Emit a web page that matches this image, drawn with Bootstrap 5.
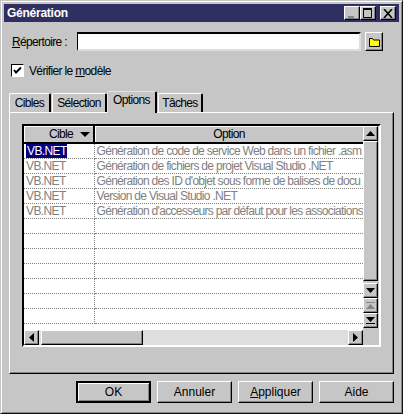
<!DOCTYPE html>
<html lang="fr">
<head>
    <meta charset="UTF-8">
    <title>Génération</title>
    <link href="https://cdn.jsdelivr.net/npm/bootstrap@5.3.2/dist/css/bootstrap.min.css" rel="stylesheet">
    <style>
        body { margin: 0; background: #c6c6c6; font-family: "Liberation Sans", Arial, sans-serif; font-size: 12px; line-height: 14px; letter-spacing: -.65px; color: #000; }
        u { text-underline-offset: 1px; }

        .raised { background: #c6c6c6; border: 1px solid; border-color: #fff #000 #000 #fff; box-shadow: inset -1px -1px 0 #848484; }

        .win { box-sizing: border-box; width: 403px; height: 414px; padding: 3px; border: 1px solid; border-color: #c6c6c6 #111 #111 #c6c6c6; box-shadow: inset 1px 1px 0 #fff, inset -1px -1px 0 #848484; }
        .titlebar { height: 18px; background: #2f2f62; color: #fff; font-size: 12px; font-weight: 700; letter-spacing: -.25px; padding-left: 3px; padding-right: 3px; }
        .capbtn { width: 16px; height: 14px; padding: 0; }
        .capbtn svg { display: block; margin: auto; }

        .dirrow { margin-top: 10px; padding-left: 8px; padding-right: 16px; height: 19px; }
        .dirlabel { width: 65px; }
        .dirinput { width: 285px; height: 19px; border: 1px solid; border-color: #000 #dedede #dedede #000; border-width: 2px 2px 2px 1px; border-radius: 0; padding: 0 2px; font-size: 12px; }
        .folderbtn { width: 18px; height: 19px; margin-left: 4px; padding: 0; border-radius: 0; }

        .chkrow { margin-top: 13px; padding-left: 7px; height: 13px; }
        .chkbox { width: 13px; height: 13px; margin: 0; border-radius: 0 !important; border: 1px solid; border-color: #000 #fff #fff #000; background-color: #fff; background-image: none; box-shadow: none; }
        .chkbox:checked { background-color: #fff; border-color: #000 #fff #fff #000; background-size: 11px 11px; background-image: url("data:image/svg+xml,%3csvg xmlns='http://www.w3.org/2000/svg' viewBox='0 0 11 11'%3e%3cpath fill='none' stroke='%23000' stroke-width='2' d='M2 5l2 2.5L9 2.5'/%3e%3c/svg%3e"); }
        .chklabel { margin-left: 5px; }

        .tabstrip { margin-top: 14px; margin-left: 5px; height: 21px; border: 0; flex-wrap: nowrap; align-items: flex-end; position: relative; z-index: 1; }
        .tabstrip .nav-link { height: 19px; margin: 0; padding: 2px 0 0; text-align: center; color: #000; background: #c6c6c6; font-size: 12px; border: 0; border-left: 1px solid #fff; border-top: 1px solid #fff; border-right: 2px solid #000; border-radius: 2px 2px 0 0; }
        .tabstrip .nav-link.active { height: 22px; padding-top: 1px; background: #c6c6c6; color: #000; border-right-color: #000; margin-bottom: -1px; }
        .tw1 { width: 42px; } .tw2 { width: 55px; margin-left: 1px !important; } .tw3 { width: 50px; } .tw4 { width: 45px; margin-left: 1px !important; }

        .tabpanel { box-sizing: border-box; width: 385px; height: 262px; margin-left: 5px; padding: 11px 12px 0; border: 1px solid; border-color: #fff #000 #000 #fff; box-shadow: inset -1px -1px 0 #848484; }
        .gridframe { box-sizing: border-box; width: 359px; height: 223px; border: 2px solid; border-color: #000 #fff #fff #000; }

        .gridbody { height: 204px; }
        .gridarea { width: 339px; height: 204px; overflow: hidden; background: #fff; }
        .gridtbl { width: 339px; table-layout: fixed; border-collapse: collapse; }
        .gridtbl th { height: 17px; padding: 0; background: #c6c6c6; font-weight: 400; text-align: center; border-right: 2px solid #000; border-bottom: 2px solid #000; box-shadow: inset 1px 1px 0 #fff; }
        .gridtbl th:first-child { padding-left: 25px; text-align: left; }
        .gridtbl th:last-child { border-right: 0; }
        .gridtbl td { height: 15px; padding: 0 0 0 2px; color: #808080; letter-spacing: -.6px; white-space: nowrap; border-bottom: 1px dotted #808080; border-right: 1px dotted #808080; }
        .gridtbl td:last-child { border-right: 0; letter-spacing: -.69px; }
        .sel span { display: block; width: 41px; height: 14px; background: #000080; color: #fff; padding-left: 1px; }
        .cola { width: 70px; }
        .sorter { display: inline-block; width: 0; height: 0; margin-left: 7px; vertical-align: 1px; border: 5px solid transparent; border-top: 5px solid #000; border-bottom: 0; }

        .vscroll { width: 16px; height: 204px; }
        .sbtn { box-sizing: border-box; width: 15px; height: 15px; padding: 0; display: flex; align-items: center; justify-content: center; flex: none; }
        .vthumb { box-sizing: border-box; width: 15px; height: 140px; flex: none; }
        .vgap { height: 2px; flex: none; }
        .hscroll { height: 15px; background: #dedede; }
        .hthumb { box-sizing: border-box; width: 102px; height: 15px; margin-left: 2px; flex: none; }
        .hcorner { width: 16px; background: #c6c6c6; }

        .footrow { margin-top: 7px; margin-left: 72px; gap: 6px; }
        .dlgbtn { box-sizing: border-box; width: 75px; height: 22px; padding: 0; font-size: 12px; line-height: 14px; color: #000; border-radius: 0; }
        .dlgbtn:hover { background: #c6c6c6; color: #000; }
        .dlgdefault { border: 2px solid #000; box-shadow: inset 1px 1px 0 #fff, inset -1px -1px 0 #848484; }
    </style>
</head>
<body>

<div class="win">
    <!-- Title bar -->
    <div class="titlebar d-flex align-items-center">
        <span class="flex-grow-1">Génération</span>
        <button class="capbtn raised" type="button" aria-label="Réduire">
            <svg width="10" height="10" viewBox="0 0 10 10"><rect x="1" y="8" width="6" height="2" fill="#848484"/></svg>
        </button>
        <button class="capbtn raised" type="button" aria-label="Agrandir">
            <svg width="10" height="10" viewBox="0 0 10 10"><path fill="none" stroke="#000" d="M.5 1.5h8v8h-8z"/><path stroke="#000" d="M0 .5h9"/></svg>
        </button>
        <button class="capbtn raised ms-1" type="button" aria-label="Fermer">
            <svg width="10" height="9" viewBox="0 0 10 9"><path stroke="#000" stroke-width="1.6" d="M1 0l8 9M9 0L1 9"/></svg>
        </button>
    </div>

    <!-- Directory -->
    <div class="dirrow d-flex align-items-center">
        <label class="dirlabel" for="dir"><u>R</u>épertoire :</label>
        <input id="dir" class="dirinput form-control" type="text">
        <button class="folderbtn raised d-flex align-items-center justify-content-center" type="button" aria-label="Parcourir">
            <svg width="11" height="10" viewBox="0 0 11 10"><path fill="#ff0" stroke="#000" d="M.5 9.5v-8h3l1 1.5h6v6.500z"/></svg>
        </button>
    </div>

    <!-- Check model -->
    <div class="chkrow d-flex align-items-center">
        <input id="chk" class="chkbox form-check-input" type="checkbox" checked>
        <label class="chklabel" for="chk">Vérifier le <u>m</u>odèle</label>
    </div>

    <!-- Tabs -->
    <ul class="tabstrip nav nav-tabs">
        <li class="nav-item"><a class="nav-link tw1" href="#">Cibles</a></li>
        <li class="nav-item"><a class="nav-link tw2" href="#">Sélection</a></li>
        <li class="nav-item"><a class="nav-link active tw3" href="#">Options</a></li>
        <li class="nav-item"><a class="nav-link tw4" href="#">Tâches</a></li>
    </ul>

    <div class="tabpanel">
        <div class="gridframe">
            <div class="gridbody d-flex">
                <div class="gridarea">
                    <table class="gridtbl">
                        <colgroup><col class="cola"><col></colgroup>
                        <thead>
                            <tr><th>Cible<span class="sorter"></span></th><th>Option</th></tr>
                        </thead>
                        <tbody id="rows"></tbody>
                    </table>
                </div>
                <div class="vscroll d-flex flex-column">
                    <div class="sbtn raised"><svg width="9" height="5" viewBox="0 0 9 5"><path d="M4.500 0L9 5H0z"/></svg></div>
                    <div class="vthumb raised"></div>
                    <div class="vgap"></div>
                    <div class="sbtn raised"><svg width="9" height="5" viewBox="0 0 9 5"><path d="M0 0h9L4.500 5z"/></svg></div>
                    <div class="sbtn raised"><svg width="9" height="7" viewBox="0 0 9 7"><path fill="#848484" d="M0 0h9v1H0zM4.500 2L9 7H0z"/></svg></div>
                    <div class="sbtn raised"><svg width="9" height="7" viewBox="0 0 9 7"><path d="M0 0h9L4.500 5zM0 6h9v1H0z"/></svg></div>
                </div>
            </div>
            <div class="hscroll d-flex">
                <div class="sbtn raised"><svg width="5" height="9" viewBox="0 0 5 9"><path d="M5 0v9L0 4.500z"/></svg></div>
                <div class="hthumb raised"></div>
                <div class="flex-grow-1"></div>
                <div class="sbtn raised"><svg width="5" height="9" viewBox="0 0 5 9"><path d="M0 0v9l5-4.500z"/></svg></div>
                <div class="hcorner"></div>
            </div>
        </div>
    </div>

    <!-- Dialog buttons -->
    <div class="footrow d-flex">
        <button class="dlgbtn btn dlgdefault" type="button">OK</button>
        <button class="dlgbtn btn raised" type="button">Annuler</button>
        <button class="dlgbtn btn raised" type="button"><u>A</u>ppliquer</button>
        <button class="dlgbtn btn raised" type="button">Aide</button>
    </div>
</div>

<script>
    const options = [
        "Génération de code de service Web dans un fichier .asm",
        "Génération de fichiers de projet Visual Studio .NET",
        "Génération des ID d'objet sous forme de balises de docu",
        "Version de Visual Studio .NET",
        "Génération d'accesseurs par défaut pour les associations"
    ];
    const tbody = document.getElementById("rows");
    for (let i = 0; i < 12; i++) {
        const tr = document.createElement("tr");
        const a = document.createElement("td");
        const b = document.createElement("td");
        if (i === 0) {
            a.className = "sel";
            a.innerHTML = "<span>VB.NET</span>";
        } else if (i < options.length) {
            a.textContent = "VB.NET";
        } else {
            a.innerHTML = "&nbsp;";
        }
        b.textContent = options[i] || "\u00a0";
        tr.append(a, b);
        tbody.append(tr);
    }
</script>

<script src="https://cdn.jsdelivr.net/npm/bootstrap@5.3.2/dist/js/bootstrap.bundle.min.js"></script>
</body>
</html>
